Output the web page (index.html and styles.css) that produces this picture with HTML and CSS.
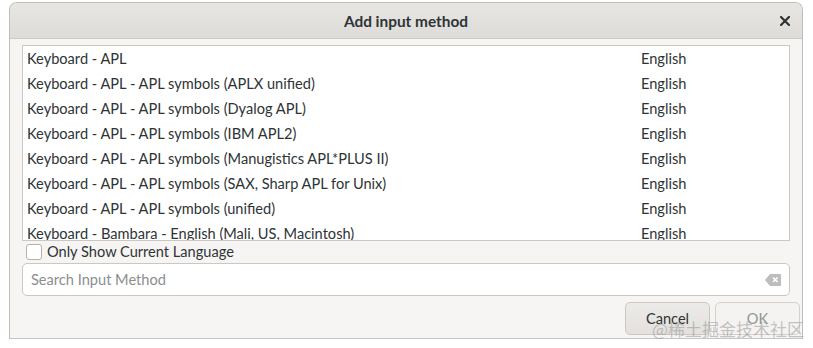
FILE: index.html
```html
<!DOCTYPE html>
<html lang="en">
<head>
    <meta charset="UTF-8">
    <title>Add input method</title>
    <link rel="stylesheet" href="styles.css">
</head>
<body>
    <div class="dialog">
        <div class="titlebar">
            <span class="title">Add input method</span>
            <span class="close">
                <svg width="10" height="10" viewBox="0 0 10 10"><path d="M1 1 L9 9 M9 1 L1 9" stroke="#2e3436" stroke-width="2.2" stroke-linecap="square"/></svg>
            </span>
        </div>
        <div class="content">
            <div class="list">
                <div class="row"><span>Keyboard - APL</span><span>English</span></div>
                <div class="row"><span>Keyboard - APL - APL symbols (APLX unified)</span><span>English</span></div>
                <div class="row"><span>Keyboard - APL - APL symbols (Dyalog APL)</span><span>English</span></div>
                <div class="row"><span>Keyboard - APL - APL symbols (IBM APL2)</span><span>English</span></div>
                <div class="row"><span>Keyboard - APL - APL symbols (Manugistics APL*PLUS II)</span><span>English</span></div>
                <div class="row"><span>Keyboard - APL - APL symbols (SAX, Sharp APL for Unix)</span><span>English</span></div>
                <div class="row"><span>Keyboard - APL - APL symbols (unified)</span><span>English</span></div>
                <div class="row"><span>Keyboard - Bambara - English (Mali, US, Macintosh)</span><span>English</span></div>
            </div>
            <label class="check-row">
                <span class="checkbox"></span>
                <span>Only Show Current Language</span>
            </label>
            <div class="entry">
                <span class="placeholder">Search Input Method</span>
                <svg class="clear-icon" width="16" height="12" viewBox="0 0 16 12">
                    <path d="M5 0 H15 a1 1 0 0 1 1 1 V11 a1 1 0 0 1 -1 1 H5 L0 6 Z" fill="#bdbdbd"/>
                    <path d="M8 3.5 L12.5 8 M12.5 3.5 L8 8" stroke="#fff" stroke-width="1.6"/>
                </svg>
            </div>
            <div class="buttons">
                <button class="btn">Cancel</button>
                <button class="btn disabled">OK</button>
            </div>
        </div>
    </div>
    <div class="watermark">@稀土掘金技术社区</div>
</body>
</html>
```

FILE: styles.css
```css
body {
    margin: 0;
    background: #ffffff;
    font-family: Lato, "Noto Sans", sans-serif;
    font-size: 14.6px;
    color: #2e3436;
}

.dialog {
    margin: 2px 0 0 9px;
    width: 792px;
    height: 335px;
    border: 1px solid #c0bcb8;
    border-bottom-color: #c8c4c0;
    border-radius: 8px 8px 0 0;
    background: #f6f5f4;
    overflow: hidden;
}

.titlebar {
    position: relative;
    height: 35px;
    display: flex;
    align-items: center;
    justify-content: center;
    background: linear-gradient(180deg, #e8e6e3 0%, #dedcd9 100%);
    border-bottom: 1px solid #cdc9c5;
}

.title {
    font-weight: bold;
    font-size: 15.4px;
}

.close {
    position: absolute;
    right: 12px;
    top: 13px;
    display: flex;
}

.content {
    padding: 6px 12px 0 12px;
}

.list {
    height: 194px;
    border: 1px solid #cdc7c2;
    background: #ffffff;
    overflow: hidden;
}

.row {
    display: grid;
    grid-template-columns: 614px 1fr;
    height: 25px;
    align-items: center;
    padding-left: 4px;
}

.check-row {
    display: flex;
    align-items: center;
    gap: 5px;
    height: 21px;
    padding-left: 4px;
}

.checkbox {
    width: 14px;
    height: 14px;
    border: 1px solid #b6b1ac;
    border-radius: 3px;
    background: #ffffff;
}

.entry {
    margin-top: 1px;
    height: 31px;
    border: 1px solid #cdc7c2;
    border-radius: 5px;
    background: #ffffff;
    display: flex;
    align-items: center;
    justify-content: space-between;
    padding: 0 8px 0 8px;
}

.placeholder {
    color: #8b8e8f;
}

.buttons {
    display: flex;
    justify-content: flex-end;
    gap: 5px;
    margin-top: 6px;
    margin-right: -10px;
}

.btn {
    width: 85px;
    height: 33px;
    border: 1px solid #cdc7c2;
    border-radius: 5px;
    background: linear-gradient(180deg, #edebe9 0%, #e3e0dd 100%);
    font-family: inherit;
    font-size: 14.6px;
    color: #2e3436;
}

.btn.disabled {
    background: #f4f3f2;
    color: #929595;
    border-color: #d5d0cc;
}

.watermark {
    position: absolute;
    left: 652px;
    top: 316px;
    font-family: "Noto Sans CJK SC", sans-serif;
    font-size: 17px;
    color: rgba(150, 150, 150, 0.55);
}
```
